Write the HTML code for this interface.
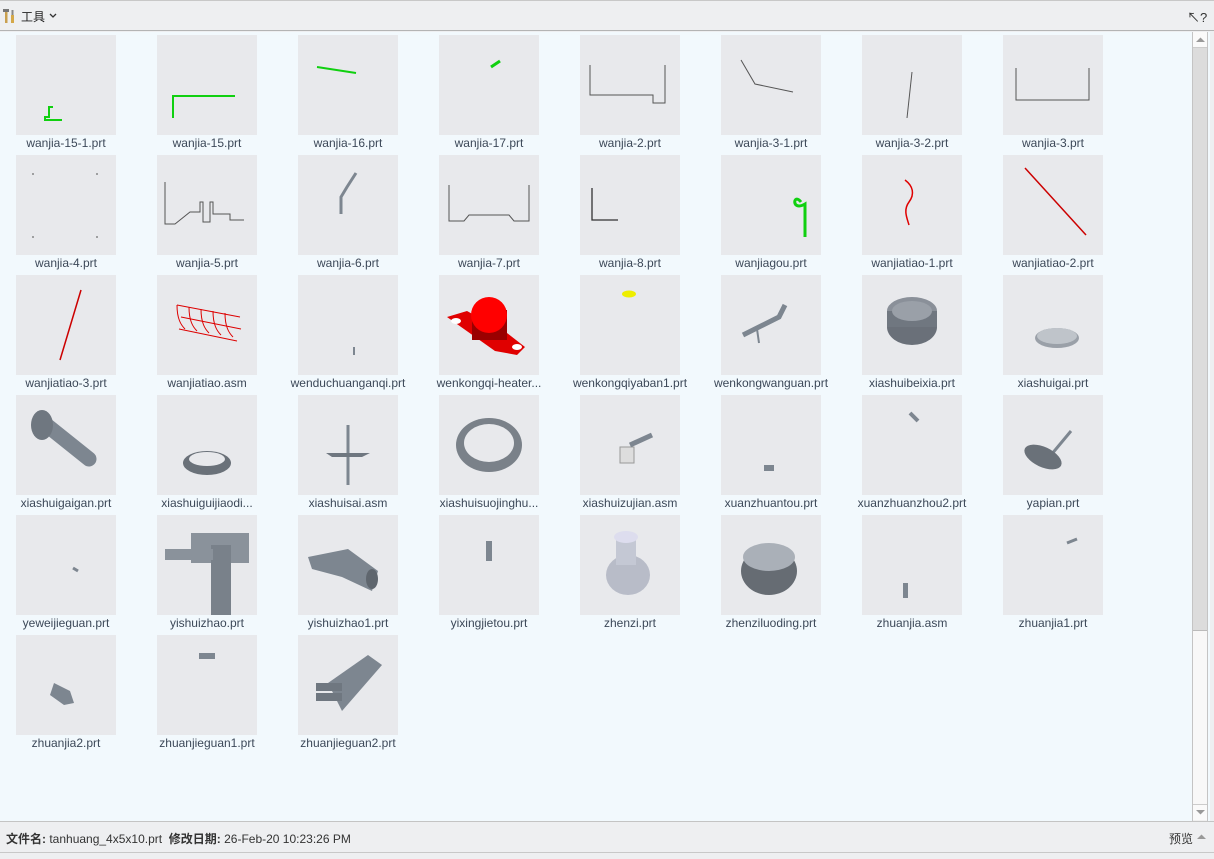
<!DOCTYPE html>
<html><head><meta charset="utf-8"><style>
*{margin:0;padding:0;box-sizing:border-box}
body{width:1214px;height:859px;overflow:hidden;background:#eeeff1;font-family:"Liberation Sans","Noto Sans CJK SC",sans-serif;position:relative}
#top{position:absolute;left:0;top:0;width:1214px;height:31px;background:#eeeff1;border-top:1px solid #c8c8c8;border-bottom:1px solid #b4b4b4}
#main{position:absolute;left:0;top:32px;width:1210px;height:789px;background:#f2f9fd}
.t{position:absolute;width:100px;height:100px;background:#e8e9ec}
.t svg{width:100px;height:100px;display:block}
.l{position:absolute;width:140px;text-align:center;font-size:12px;color:#3c4858;white-space:nowrap;line-height:14px}
#sb{position:absolute;left:1192px;top:32px;width:16px;height:789px;background:#f0f0f0;border-left:1px solid #c4c4c4;border-right:1px solid #c4c4c4}
#bot{position:absolute;left:0;top:821px;width:1214px;height:38px;background:#eeeff1;border-top:1px solid #c4c4c4}
</style></head><body>
<div id="top">
<svg style="position:absolute;left:2px;top:7px" width="14" height="16" viewBox="0 0 14 16"><rect x="1" y="1" width="6" height="3" fill="#777"/><rect x="3" y="4" width="2.5" height="11" fill="#c9a050"/><rect x="9.5" y="2" width="2" height="5" fill="#888"/><rect x="9" y="7" width="3" height="8" fill="#d4a84a"/></svg>
<span style="position:absolute;left:21px;top:7px;font-size:12px;color:#222">工具</span>
<svg style="position:absolute;left:49px;top:12px" width="8" height="6"><path d="M1 1l3 3 3-3" stroke="#333" fill="none" stroke-width="1.3"/></svg>
<span style="position:absolute;left:1187px;top:6px;font-size:13px;color:#333">↖?</span>
</div>
<div id="main"></div>
<div id="sb">
<div style="position:absolute;left:0;top:0;width:14px;height:16px;background:#fafafa;border-bottom:1px solid #ccc"></div>
<svg style="position:absolute;left:3px;top:5px" width="9" height="6"><path d="M0 5l4.5-4.5 4.5 4.5z" fill="#999"/></svg>
<div style="position:absolute;left:0;top:16px;width:14px;height:582px;background:#dcdcdc"></div>
<div style="position:absolute;left:0;top:598px;width:14px;height:174px;background:#f8f8f8;border-top:1px solid #bbb"></div>
<div style="position:absolute;left:0;top:772px;width:14px;height:16px;background:#fafafa;border-top:1px solid #ccc"></div>
<svg style="position:absolute;left:3px;top:778px" width="9" height="6"><path d="M0 0l4.5 4.5 4.5-4.5z" fill="#999"/></svg>
</div>
<div id="bot">
<span style="position:absolute;left:6px;top:8px;font-size:12px;color:#333"><b>文件名:</b> tanhuang_4x5x10.prt&nbsp; <b>修改日期:</b> 26-Feb-20 10:23:26 PM</span>
<span style="position:absolute;left:1169px;top:8px;font-size:12px;color:#333">预览</span>
<svg style="position:absolute;left:1197px;top:12px" width="9" height="6"><path d="M0 5l4.5-4.5 4.5 4.5z" fill="#999"/></svg>
<div style="position:absolute;left:0;top:30px;width:1214px;height:1px;background:#c8c8c8"></div>
</div>
<div id="grid"></div>
<script>
var G='#7d8690',R='#e00000',Gr='#10d010';
var items=[
['wanjia-15-1.prt','<path d="M37 72h-4v10h-4v3h17" stroke="'+Gr+'" stroke-width="2" fill="none"/>'],
['wanjia-15.prt','<path d="M78 61H16v22" stroke="'+Gr+'" stroke-width="2" fill="none"/>'],
['wanjia-16.prt','<path d="M19 32l39 6" stroke="'+Gr+'" stroke-width="2"/>'],
['wanjia-17.prt','<path d="M52 32l9-6" stroke="'+Gr+'" stroke-width="3"/>'],
['wanjia-2.prt','<path d="M10 30v30h63v8h12V30" stroke="#555" stroke-width="1" fill="none"/>'],
['wanjia-3-1.prt','<path d="M20 25l14 24 38 8" stroke="#555" stroke-width="1" fill="none"/>'],
['wanjia-3-2.prt','<path d="M50 37l-5 46" stroke="#555" stroke-width="1"/>'],
['wanjia-3.prt','<path d="M13 33v32h73V33" stroke="#555" stroke-width="1" fill="none"/>'],
['wanjia-4.prt','<path d="M17 18v2M81 18v2M17 81v2M81 81v2" stroke="#555"/>'],
['wanjia-5.prt','<path d="M8 27v42h10l15-12h10v-10h3v20h7v-20h3v12h17v6h14" stroke="#555" fill="none"/>'],
['wanjia-6.prt','<path d="M58 18l-9 14-6 10v17" stroke="'+G+'" stroke-width="3" fill="none"/>'],
['wanjia-7.prt','<path d="M10 30v36h15l5-6h40l5 6h15V30" stroke="#555" fill="none"/>'],
['wanjia-8.prt','<path d="M12 33v32h26" stroke="#333" stroke-width="1.3" fill="none"/>'],
['wanjiagou.prt','<path d="M80 47c-8-10-10 10 4 2v33" stroke="'+Gr+'" stroke-width="3" fill="none"/>'],
['wanjiatiao-1.prt','<path d="M43 25c8 6 10 14 4 22-6 8-2 16 0 23" stroke="'+R+'" stroke-width="1.5" fill="none"/>'],
['wanjiatiao-2.prt','<path d="M22 13l61 67" stroke="#c00" stroke-width="1.5"/>'],
['wanjiatiao-3.prt','<path d="M65 15l-21 70" stroke="#c00" stroke-width="1.5"/>'],
['wanjiatiao.asm','<g stroke="#d00" fill="none"><path d="M20 30l63 12M24 42l60 12M22 54l58 12"/><path d="M20 30c0 14 4 20 8 24M32 32c0 14 4 20 8 24M44 34c0 14 4 20 8 24M56 36c0 14 4 20 8 24M68 38c0 14 4 20 8 24"/></g>'],
['wenduchuanganqi.prt','<path d="M56 72v8" stroke="'+G+'" stroke-width="2"/>'],
['wenkongqi-heater...','<path d="M8 42l20-6 40 22 18 14-8 8-22-4z" fill="'+R+'"/><ellipse cx="17" cy="46" rx="5" ry="3" fill="#fff"/><ellipse cx="78" cy="72" rx="5" ry="3" fill="#fff"/><rect x="33" y="35" width="35" height="30" fill="#9a0000"/><circle cx="50" cy="40" r="18" fill="#f00"/>'],
['wenkongqiyaban1.prt','<ellipse cx="49" cy="19" rx="7" ry="3.5" fill="#ee0"/>'],
['wenkongwanguan.prt','<path d="M22 60l20-10 16-8 6-12" stroke="'+G+'" stroke-width="5" fill="none"/><path d="M36 54l2 14" stroke="'+G+'" stroke-width="2"/>'],
['xiashuibeixia.prt','<ellipse cx="50" cy="52" rx="25" ry="18" fill="#6a7079"/><ellipse cx="50" cy="36" rx="25" ry="14" fill="#8a9099"/><rect x="25" y="36" width="50" height="16" fill="#707780"/><ellipse cx="50" cy="36" rx="20" ry="10" fill="#9aa0a8"/>'],
['xiashuigai.prt','<ellipse cx="54" cy="63" rx="22" ry="10" fill="#9aa0a8"/><ellipse cx="54" cy="61" rx="20" ry="8" fill="#bfc4ca"/>'],
['xiashuigaigan.prt','<path d="M28 28l45 36" stroke="'+G+'" stroke-width="15" stroke-linecap="round"/><ellipse cx="26" cy="30" rx="11" ry="15" fill="#6f7780"/>'],
['xiashuiguijiaodi...','<ellipse cx="50" cy="68" rx="24" ry="12" fill="#6a7179"/><ellipse cx="50" cy="64" rx="18" ry="7" fill="#e8e9ec"/>'],
['xiashuisai.asm','<path d="M50 30v60" stroke="'+G+'" stroke-width="3"/><path d="M28 58h44l-8 4H34z" fill="#6f7780"/>'],
['xiashuisuojinghu...','<ellipse cx="50" cy="50" rx="33" ry="27" fill="#7a8189"/><ellipse cx="50" cy="48" rx="25" ry="19" fill="#e8e9ec"/>'],
['xiashuizujian.asm','<rect x="40" y="52" width="14" height="16" fill="#ddd" stroke="#999"/><path d="M50 50l22-10" stroke="'+G+'" stroke-width="5"/>'],
['xuanzhuantou.prt','<rect x="43" y="70" width="10" height="6" fill="'+G+'"/>'],
['xuanzhuanzhou2.prt','<path d="M48 18l8 8" stroke="'+G+'" stroke-width="4"/>'],
['yapian.prt','<path d="M68 36l-20 24" stroke="'+G+'" stroke-width="3"/><ellipse cx="40" cy="62" rx="20" ry="10" fill="#6a7179" transform="rotate(25 40 62)"/>'],
['yeweijieguan.prt','<path d="M57 53l5 3" stroke="'+G+'" stroke-width="3"/>'],
['yishuizhao.prt','<rect x="34" y="18" width="58" height="30" fill="#8a929b"/><rect x="54" y="30" width="20" height="70" fill="#79818a"/><rect x="8" y="34" width="48" height="11" fill="#8a929b"/>'],
['yishuizhao1.prt','<path d="M10 42l40-8 30 22-6 20-30-14-30-8z" fill="#7d8690"/><ellipse cx="74" cy="64" rx="6" ry="10" fill="#5f666e"/>'],
['yixingjietou.prt','<rect x="47" y="26" width="6" height="20" fill="'+G+'"/>'],
['zhenzi.prt','<ellipse cx="48" cy="60" rx="22" ry="20" fill="#b8bcc8"/><rect x="36" y="20" width="20" height="30" fill="#c4c8d4"/><ellipse cx="46" cy="22" rx="12" ry="6" fill="#dde"/>'],
['zhenziluoding.prt','<ellipse cx="48" cy="56" rx="28" ry="24" fill="#666c73"/><ellipse cx="48" cy="42" rx="26" ry="14" fill="#aab0b8"/>'],
['zhuanjia.asm','<rect x="41" y="68" width="5" height="15" fill="'+G+'"/>'],
['zhuanjia1.prt','<path d="M64 28l10-4" stroke="'+G+'" stroke-width="3"/>'],
['zhuanjia2.prt','<path d="M38 48l16 8 4 12-10 2-14-10z" fill="'+G+'"/>'],
['zhuanjieguan1.prt','<path d="M42 18h16v6H42z" fill="'+G+'"/>'],
['zhuanjieguan2.prt','<path d="M30 48l40-28 14 10-40 46z" fill="#7d8690"/><path d="M18 52h26M18 62h26" stroke="#6f7780" stroke-width="8"/>']
];
var h='';
items.forEach(function(it,i){var c=i%8,r=Math.floor(i/8);var x=16+141*c,y=35+120*r;
h+='<div class="t" style="left:'+x+'px;top:'+y+'px"><svg viewBox="0 0 100 100">'+it[1]+'</svg></div>';
h+='<div class="l" style="left:'+(x-20)+'px;top:'+(y+101)+'px">'+it[0]+'</div>';});
document.getElementById('grid').innerHTML=h;
</script>
</body></html>
